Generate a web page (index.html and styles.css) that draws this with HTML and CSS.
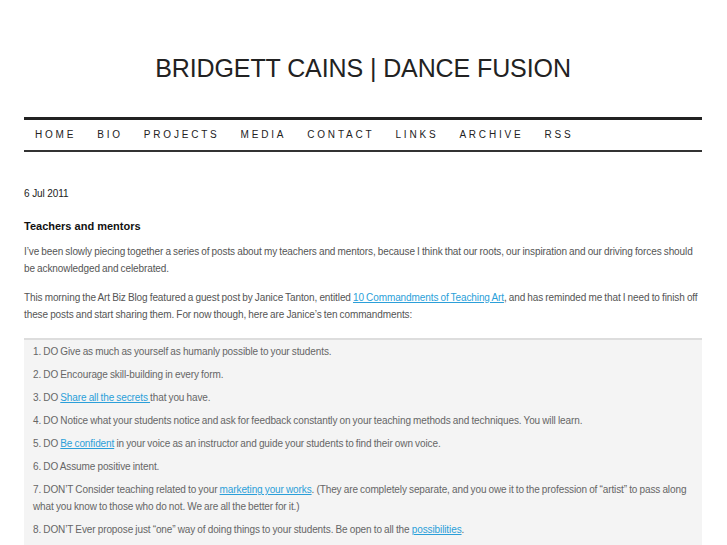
FILE: index.html
```html
<!DOCTYPE html>
<html>
<head>
<meta charset="utf-8">
<title>Bridgett Cains | Dance Fusion</title>
<link rel="stylesheet" href="styles.css">
</head>
<body>
<div class="page">
  <header class="masthead">
    <h1 class="site-title">BRIDGETT CAINS | DANCE FUSION</h1>
  </header>
  <nav class="nav">
    <a href="#">HOME</a>
    <a href="#">BIO</a>
    <a href="#">PROJECTS</a>
    <a href="#">MEDIA</a>
    <a href="#">CONTACT</a>
    <a href="#">LINKS</a>
    <a href="#">ARCHIVE</a>
    <a href="#">RSS</a>
  </nav>
  <article class="post">
    <div class="date">6 Jul 2011</div>
    <h2 class="post-title">Teachers and mentors</h2>
    <p>I’ve been slowly piecing together a series of posts about my teachers and mentors, because I think that our roots, our inspiration and our driving forces should be acknowledged and celebrated.</p>
    <p>This morning the Art Biz Blog featured a guest post by Janice Tanton, entitled <a href="#">10 Commandments of Teaching Art</a>, and has reminded me that I need to finish off these posts and start sharing them. For now though, here are Janice’s ten commandments:</p>
    <blockquote class="quote">
      <p>1. DO Give as much as yourself as humanly possible to your students.</p>
      <p>2. DO Encourage skill-building in every form.</p>
      <p>3. DO <a href="#">Share all the secrets </a>that you have.</p>
      <p>4. DO Notice what your students notice and ask for feedback constantly on your teaching methods and techniques. You will learn.</p>
      <p>5. DO <a href="#">Be confident</a> in your voice as an instructor and guide your students to find their own voice.</p>
      <p>6. DO Assume positive intent.</p>
      <p>7. DON’T Consider teaching related to your <a href="#">marketing your works</a>. (They are completely separate, and you owe it to the profession of “artist” to pass along what you know to those who do not. We are all the better for it.)</p>
      <p>8. DON’T Ever propose just “one” way of doing things to your students. Be open to all the <a href="#">possibilities</a>.</p>
      <p>9. DON’T Ever stop learning.</p>
    </blockquote>
  </article>
</div>
</body>
</html>
```

FILE: styles.css
```css
html, body {
  margin: 0;
  padding: 0;
  background: #fff;
}
body {
  font-family: "Liberation Sans", Arial, sans-serif;
  color: #555;
}
.page {
  padding: 0 25px 0 24px;
}
.masthead {
  padding-top: 53px;
  text-align: center;
}
.site-title {
  margin: 0;
  font-size: 25px;
  line-height: 30px;
  font-weight: normal;
  letter-spacing: -0.1px;
  color: #222;
}
.nav {
  margin-top: 34px;
  border-top: 3px solid #222;
  border-bottom: 2px solid #333;
  padding: 9px 0 9px 11px;
  display: flex;
  gap: 21px;
}
.nav a {
  font-size: 10px;
  line-height: 12px;
  letter-spacing: 2.8px;
  color: #222;
  text-decoration: none;
}
.post {
  padding-top: 33px;
}
.date {
  font-size: 10px;
  line-height: 17px;
  letter-spacing: -0.1px;
  color: #222;
}
.post-title {
  margin: 16px 0 8px;
  font-size: 11px;
  line-height: 17px;
  font-weight: bold;
  color: #111;
}
.post p {
  margin: 0 0 12px;
  font-size: 10px;
  line-height: 17px;
  letter-spacing: -0.1px;
  word-spacing: -0.5px;
}
.post a {
  color: #2b9fd9;
  text-decoration: underline;
}
.quote {
  margin: 15px 0 0;
  padding: 3px 9px 10px;
  background: #f4f4f4;
  border-top: 2px solid #ddd;
}
.quote p {
  margin: 0 0 6px;
  color: #666;
}
```
